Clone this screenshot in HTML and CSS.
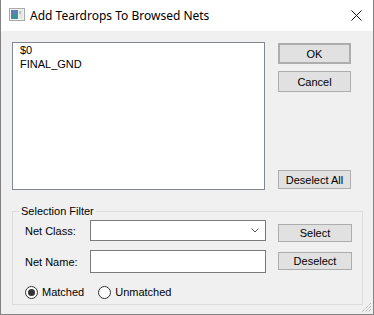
FILE: index.html
```html
<!DOCTYPE html>
<html lang="en">
<head>
  <meta charset="UTF-8" />
  <title>Add Teardrops To Browsed Nets</title>
  <link rel="stylesheet" href="styles.css">
</head>
<body>
  <div class="window">
    <div class="titlebar">
      <svg class="app-icon" width="16" height="13" viewBox="0 0 16 13">
        <rect x="0.5" y="0.5" width="15" height="12" fill="#f4f4f4" stroke="#a9a9a9"/>
        <rect x="2" y="2" width="7" height="9" fill="#3f8f9a"/>
        <rect x="2" y="2" width="7" height="4" fill="#5b7fb8"/>
        <rect x="10" y="2" width="4" height="9" fill="#e3e6e8"/>
        <rect x="10" y="3" width="2" height="3" fill="#9fd3c0"/>
      </svg>
      <span class="title">Add Teardrops To Browsed Nets</span>
      <svg class="close" width="11" height="11" viewBox="0 0 11 11">
        <path d="M0.5 0.5 L10.5 10.5 M10.5 0.5 L0.5 10.5" stroke="#111" stroke-width="1"/>
      </svg>
    </div>

    <div class="content">
      <div class="top-row">
        <div class="listbox">
          <div class="item">$0</div>
          <div class="item">FINAL_GND</div>
        </div>
        <div class="side-buttons">
          <button class="btn btn-default">OK</button>
          <button class="btn btn-cancel">Cancel</button>
          <button class="btn btn-deselect-all">Deselect All</button>
        </div>
      </div>

      <fieldset class="filter">
        <legend>Selection Filter</legend>
        <div class="filter-row first">
          <label class="field-label">Net Class:</label>
          <div class="combo">
            <svg width="8" height="5" viewBox="0 0 8 5">
              <path d="M0.5 0.5 L4 4 L7.5 0.5" fill="none" stroke="#555" stroke-width="1"/>
            </svg>
          </div>
          <button class="btn btn-small">Select</button>
        </div>
        <div class="filter-row second">
          <label class="field-label">Net Name:</label>
          <div class="textbox"></div>
          <button class="btn btn-small">Deselect</button>
        </div>
        <div class="radio-row">
          <span class="radio checked"></span>
          <span class="radio-label">Matched</span>
          <span class="radio"></span>
          <span class="radio-label">Unmatched</span>
        </div>
      </fieldset>
    </div>

    <svg class="grip" width="11" height="11" viewBox="0 0 11 11">
      <path d="M10 1 L1 10 M10 4 L4 10 M10 7 L7 10" stroke="#a0a0a0" stroke-width="1" stroke-dasharray="1 1"/>
    </svg>
  </div>
</body>
</html>
```

FILE: styles.css
```css
body {
  margin: 0;
  padding: 0;
  font-family: 'Liberation Sans', Arial, sans-serif;
  font-size: 11px;
  color: #000;
}

.window {
  position: relative;
  width: 374px;
  height: 315px;
  box-sizing: border-box;
  border: 1px solid #838383;
  border-top: none;
  background-color: #f0f0f0;
  display: flex;
  flex-direction: column;
}

.titlebar {
  height: 31px;
  flex-shrink: 0;
  background-color: #fff;
  display: flex;
  align-items: center;
  padding-left: 8px;
  padding-right: 10px;
}

.app-icon {
  margin-top: -2px;
}

.title {
  font-family: 'Noto Sans', sans-serif;
  font-size: 12px;
  margin-left: 5px;
  margin-top: -1px;
  flex: 1;
}

.close {
  margin-right: 1px;
  margin-top: -1px;
}

.content {
  padding: 11px 0 0 11px;
}

.top-row {
  display: flex;
  gap: 13px;
  height: 148px;
}

.listbox {
  width: 253px;
  box-sizing: border-box;
  border: 1px solid #828790;
  background-color: #fff;
  padding: 1px 7px;
}

.item {
  line-height: 13px;
  height: 14px;
}

.side-buttons {
  display: flex;
  flex-direction: column;
  width: 73px;
}

.btn {
  font-family: 'Liberation Sans', Arial, sans-serif;
  font-size: 11px;
  color: #000;
  background-color: #e1e1e1;
  border: 1px solid #adadad;
  box-sizing: border-box;
  padding: 0;
  margin: 0;
}

.btn-default {
  margin-top: 1px;
  height: 21px;
  border: 2px solid #adadad;
}

.btn-cancel {
  margin-top: 7px;
  height: 21px;
}

.btn-deselect-all {
  margin-top: auto;
  margin-bottom: 1px;
  height: 19px;
}

.filter {
  margin: 15px 0 0 0;
  width: 351px;
  height: 100px;
  box-sizing: border-box;
  border: 1px solid #dcdcdc;
  padding: 0 0 0 12px;
}

.filter legend {
  margin-left: -6px;
  padding: 0 2px;
  line-height: 13px;
}

.filter-row {
  display: flex;
  align-items: flex-start;
}

.filter-row.first {
  margin-top: 2px;
}

.filter-row.second {
  margin-top: 8px;
}

.field-label {
  width: 65px;
  line-height: 13px;
}

.first .field-label {
  padding-top: 5px;
}

.second .field-label {
  padding-top: 6px;
}

.combo {
  width: 176px;
  height: 21px;
  box-sizing: border-box;
  border: 1px solid #7a7a7a;
  background-color: #fff;
  display: flex;
  align-items: center;
  justify-content: flex-end;
  padding-right: 6px;
}

.textbox {
  width: 176px;
  height: 23px;
  box-sizing: border-box;
  border: 1px solid #7a7a7a;
  background-color: #fff;
}

.btn-small {
  width: 74px;
  height: 18px;
  margin-left: 12px;
}

.first .btn-small {
  margin-top: 4px;
}

.second .btn-small {
  margin-top: 2px;
}

.radio-row {
  display: flex;
  align-items: center;
  margin-top: 13px;
}

.radio {
  width: 13px;
  height: 13px;
  box-sizing: border-box;
  border: 1px solid #333;
  border-radius: 50%;
  background-color: #fff;
  display: flex;
  align-items: center;
  justify-content: center;
}

.radio.checked::after {
  content: "";
  width: 7px;
  height: 7px;
  border-radius: 50%;
  background-color: #333;
}

.radio-label {
  margin-left: 4px;
  margin-right: 14px;
  line-height: 13px;
}

.grip {
  position: absolute;
  right: 1px;
  bottom: 1px;
}
```
